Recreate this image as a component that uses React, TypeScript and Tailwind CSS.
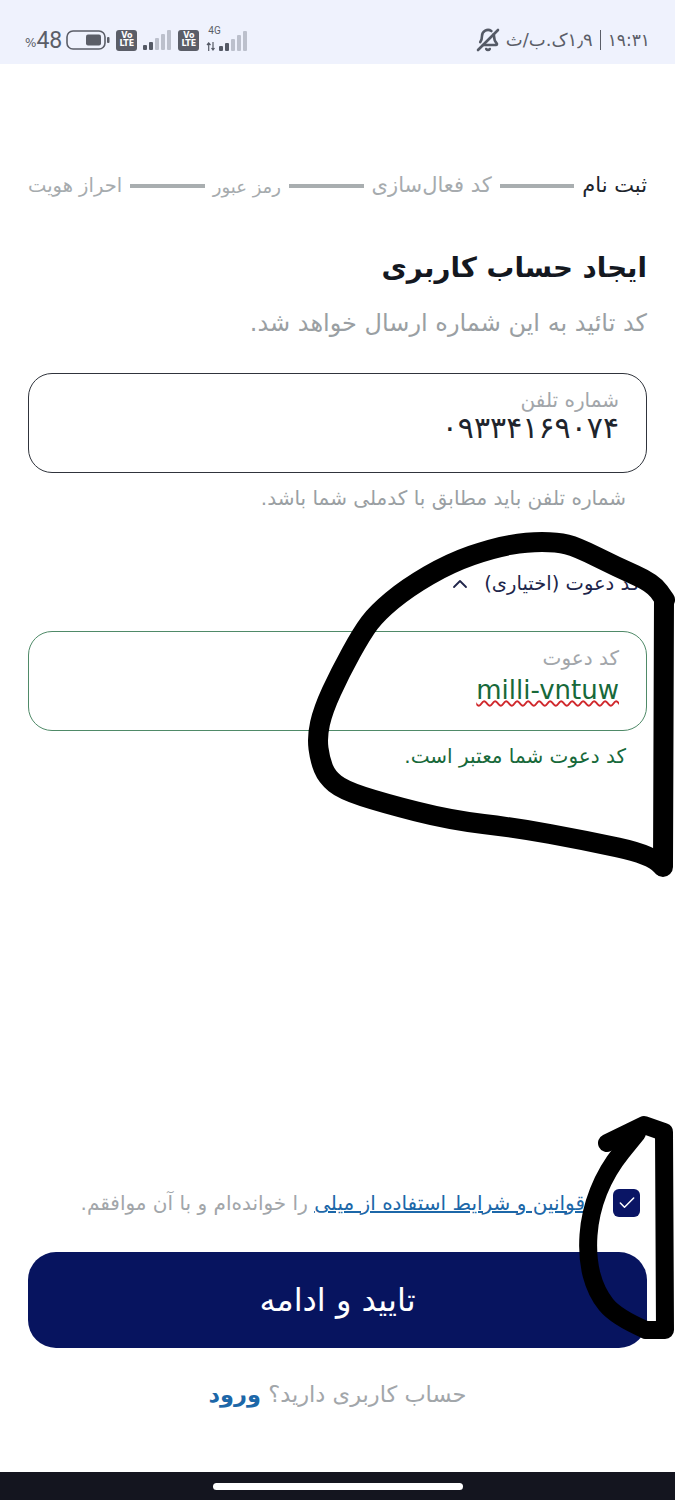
import React from 'react';
import { BellOff, Check, ChevronUp } from 'lucide-react';

const steps = [
  { label: 'ثبت نام', cls: 'text-[21px] text-[#20242c]' },
  { label: 'کد فعال‌سازی', cls: 'text-[21px]' },
  { label: 'رمز عبور', cls: 'text-[18px]' },
  { label: 'احراز هویت', cls: 'text-[19.5px]' },
];

const SignalBars = ({ active }: { active: number }) => (
  <div className="flex items-end gap-[2px] h-[20px]">
    {[5, 8, 12, 16, 20].map((h, i) => (
      <svg key={i} width="4" height={h} className="block">
        <rect width="4" height={h} rx="1" fill={i < active ? '#555a66' : '#bcc0cc'} />
      </svg>
    ))}
  </div>
);

const VoLte = () => (
  <div className="w-[21px] h-[21px] rounded-[3px] bg-[#5b5e68] flex flex-col items-center justify-center text-white text-[8px] leading-[8px] font-bold">
    <span>Vo</span>
    <span>LTE</span>
  </div>
);

const StatusBar = () => (
  <div dir="ltr" className="h-[64px] bg-[#eff2fd] flex items-center justify-between pl-[25px] pr-[25px] pt-[16px] text-[#5b5e68]">
    <div className="flex items-center">
      <span className="text-[12px] mt-[6px]">%</span>
      <span className="text-[23px] leading-none font-['Roboto',sans-serif]">48</span>
      <svg width="44" height="20" viewBox="0 0 44 20" className="ml-[4px]">
        <rect x="1" y="1" width="38" height="18" rx="6" fill="none" stroke="#5b5e68" strokeWidth="1.6" />
        <rect x="20" y="4.5" width="15" height="11" rx="2" fill="#5b5e68" />
        <rect x="41" y="7" width="2.5" height="6" rx="1" fill="#5b5e68" />
      </svg>
      <div className="ml-[6px]"><VoLte /></div>
      <div className="ml-[6px]"><SignalBars active={2} /></div>
      <div className="ml-[7px]"><VoLte /></div>
      <div className="ml-[7px] relative flex items-end h-[22px]">
        <span className="absolute left-[2px] top-[-3px] text-[10px] leading-none font-['Roboto',sans-serif]">4G</span>
        <svg width="10" height="9" viewBox="0 0 9 9" className="mr-[3px]">
          <path d="M2.2 9V1M0.5 3L2.2 1L4 3M6.5 0v8M5 6l1.5 2L8 6" stroke="#555a66" strokeWidth="1.2" fill="none" />
        </svg>
        <SignalBars active={2} />
      </div>
    </div>
    <div className="flex items-center gap-[6px] text-[18px] leading-none">
      <BellOff size={24} strokeWidth={2.6} className="text-[#555a66] -scale-x-100" />
      <span dir="rtl" className="flex items-center gap-[7px]">
        <span className="text-[17px]">۱۹:۳۱</span>
        <span className="w-[1px] h-[20px] bg-[#5b5e68]" />
        <span>۱٫۹ک.ب/ث</span>
      </span>
    </div>
  </div>
);

// midpoint smoothing, the pen lines in the picture have no hard corners
const smooth = (pts: number[][]) => {
  let d = `M${pts[0][0]} ${pts[0][1]}`;
  for (let i = 1; i < pts.length - 1; i++) {
    const mx = (pts[i][0] + pts[i + 1][0]) / 2;
    const my = (pts[i][1] + pts[i + 1][1]) / 2;
    d += `Q${pts[i][0]} ${pts[i][1]} ${mx} ${my}`;
  }
  const last = pts[pts.length - 1];
  return `${d}L${last[0]} ${last[1]}`;
};

const bigLoop = [[662, 866], [653, 855], [583, 840], [517, 828], [450, 820], [383, 803], [343, 790], [327, 777], [320, 760], [317, 737], [323, 710], [340, 673], [362, 633], [377, 613], [407, 588], [450, 563], [493, 548], [527, 542], [557, 542], [577, 547], [617, 567], [653, 583], [665, 600]];
const smallLoop = [[646, 1330], [616, 1317], [596, 1292], [587, 1257], [590, 1213], [607, 1170], [637, 1133]];

const Scribbles = () => (
  <svg width="675" height="1500" viewBox="0 0 675 1500" className="absolute inset-0 pointer-events-none" fill="none" stroke="#000" strokeWidth="20" strokeLinecap="round" strokeLinejoin="round">
    <path d={smooth(bigLoop)} />
    <path d="M664 600L663 867" />
    <path d={smooth(smallLoop)} strokeWidth="18" />
    <path d="M607 1143L644 1125L664 1132L665 1330L646 1330" strokeWidth="18" />
  </svg>
);

export default function App() {
  return (
    <div dir="rtl" className="relative w-[675px] h-[1500px] overflow-hidden bg-white flex flex-col font-['DejaVu_Sans',sans-serif]">
      <StatusBar />

      <div className="flex-1 flex flex-col px-[28px]">
        {/* stepper */}
        <div className="mt-[110px] h-[24px] flex items-center gap-[8px] text-[#a6abae]">
          {steps.map((s, i) => (
            <React.Fragment key={s.label}>
              {i > 0 && <div className="flex-1 h-[4px] bg-[#a9aeb0]" />}
              <span className={s.cls}>{s.label}</span>
            </React.Fragment>
          ))}
        </div>

        <h1 className="mt-[50px] h-[40px] leading-[40px] text-[27.7px] font-bold text-[#14181f]">ایجاد حساب کاربری</h1>
        <p className="mt-[19px] h-[32px] leading-[32px] text-[24px] text-[#9a9fa3]">کد تائید به این شماره ارسال خواهد شد.</p>

        <div className="mt-[34px] h-[100px] border-[1.5px] border-[#30343c] rounded-[24px] px-[27px] pt-[14px]">
          <div className="text-[20px] leading-[24px] text-[#a2a6aa]">شماره تلفن</div>
          <div className="text-[30px] leading-[32px] text-[#20242c] tracking-[1px]">۰۹۳۳۴۱۶۹۰۷۴</div>
        </div>
        <p className="mt-[13px] pr-[21px] text-[20px] leading-[24px] text-[#9a9fa3]">شماره تلفن باید مطابق با کدملی شما باشد.</p>

        <div className="mt-[61px] h-[26px] flex items-center gap-[12px] pr-[7px] text-[#20254a] text-[19.5px]">
          <span>کد دعوت (اختیاری)</span>
          <ChevronUp size={24} strokeWidth={1.8} />
        </div>

        <div className="mt-[34px] h-[100px] border-[1.5px] border-[#4f8a68] rounded-[24px] px-[27px] pt-[14px]">
          <div className="text-[20px] leading-[24px] text-[#a2a6aa]">کد دعوت</div>
          <div dir="ltr" className="mt-[4px] text-right text-[26px] leading-[32px] text-[#17693a] underline decoration-wavy decoration-[#d0282c] decoration-[1.5px] underline-offset-[1px]">milli-vntuw</div>
        </div>
        <p className="mt-[13px] pr-[21px] text-[20px] leading-[24px] text-[#17693a]">کد دعوت شما معتبر است.</p>

        <div className="mt-[421px] pr-[7px] flex items-center gap-[28px] h-[28px]">
          <div className="w-[27px] h-[28px] shrink-0 rounded-[6px] bg-[#0a1565] flex items-center justify-center">
            <Check size={20} strokeWidth={1.8} className="text-white" />
          </div>
          <p className="text-[20px] text-[#a2a6aa] whitespace-nowrap">
            <span className="text-[#1c67a8] underline">قوانین و شرایط استفاده از میلی</span> را خوانده‌ام و با آن موافقم.
          </p>
        </div>

        <button className="mt-[35px] h-[96px] rounded-[28px] bg-[#07145f] text-white text-[32px]">تایید و ادامه</button>

        <p className="mt-[32px] text-center text-[22.5px] leading-[28px] text-[#a2a6aa]">
          حساب کاربری دارید؟ <span className="font-bold text-[#1c67a8]">ورود</span>
        </p>
      </div>

      <div className="h-[28px] bg-[#14151f] flex items-center justify-center">
        <div className="w-[250px] h-[7px] rounded-full bg-white" />
      </div>

      <Scribbles />
    </div>
  );
}
